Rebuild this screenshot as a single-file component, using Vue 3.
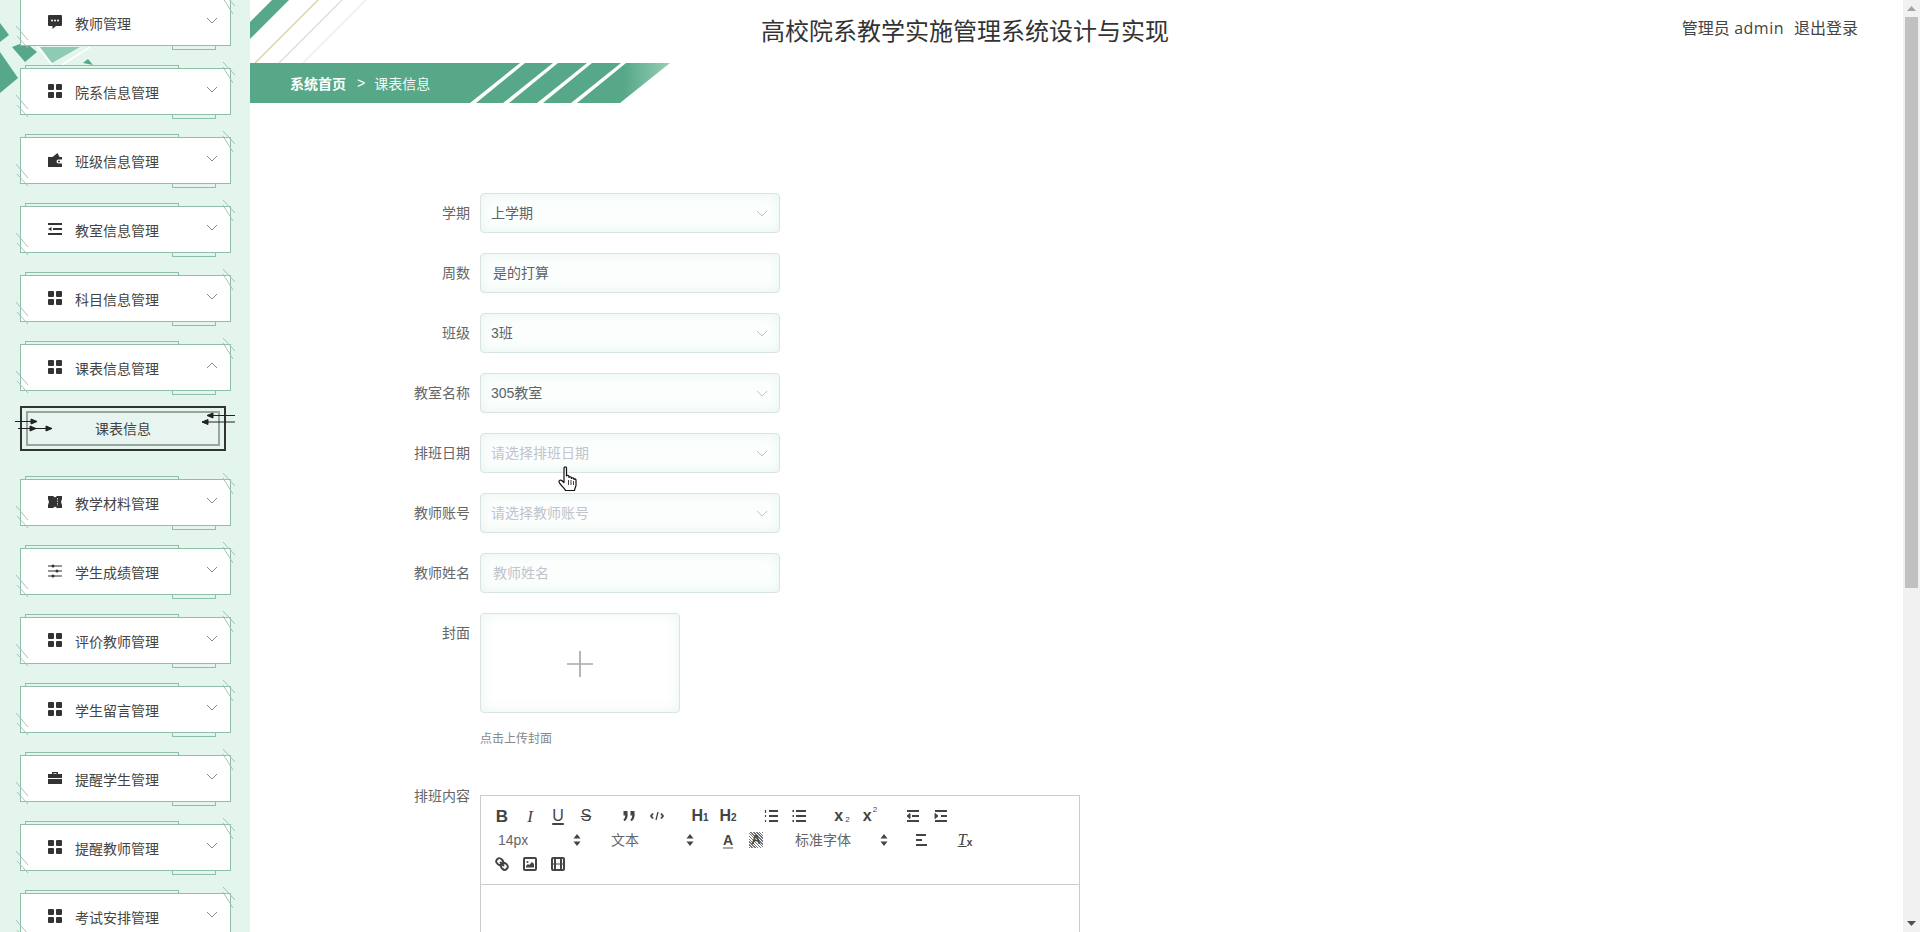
<script setup>
const menus = [
  { name: '教师管理', icon: 'chat' },
  { name: '院系信息管理', icon: 'grid' },
  { name: '班级信息管理', icon: 'wallet' },
  { name: '教室信息管理', icon: 'list' },
  { name: '科目信息管理', icon: 'grid' },
  { name: '课表信息管理', icon: 'grid', open: true, sub: '课表信息' },
  { name: '教学材料管理', icon: 'ticket' },
  { name: '学生成绩管理', icon: 'sliders' },
  { name: '评价教师管理', icon: 'grid' },
  { name: '学生留言管理', icon: 'grid' },
  { name: '提醒学生管理', icon: 'case' },
  { name: '提醒教师管理', icon: 'grid' },
  { name: '考试安排管理', icon: 'grid' }
]
const fields = [
  { label: '学期', value: '上学期', select: true },
  { label: '周数', value: '是的打算' },
  { label: '班级', value: '3班', select: true },
  { label: '教室名称', value: '305教室', select: true },
  { label: '排班日期', placeholder: '请选择排班日期', select: true },
  { label: '教师账号', placeholder: '请选择教师账号', select: true },
  { label: '教师姓名', placeholder: '教师姓名' }
]
const stripes = [270, 303, 337, 371]
</script>

<template>
  <div class="page">
    <aside class="side">
      <svg class="side-art" width="250" height="110" viewBox="0 0 250 110">
        <polygon points="0,23 9,35 0,42" fill="#57a888" />
        <polygon points="12,47 25,42 37,52 25,62" fill="#57a888" />
        <polygon points="0,52 18,78 0,93" fill="#57a888" />
        <polygon points="40,47 80,47 52,63" fill="#8fcbb3" />
        <path d="M37 46 52 65M62 65 90 47" stroke="#fff" stroke-width="1.5" fill="none" />
        <polygon points="83,63 88,59 93,65" fill="#57a888" />
      </svg>
      <nav class="menu">
        <template v-for="m in menus" :key="m.name">
          <div class="card">
            <span class="strip-top"></span>
            <span class="strip-bottom"></span>
            <svg class="hatch" width="211" height="47" viewBox="0 0 211 47">
              <path d="M203 -6 215 7M203 -1 213 15M-4 27 8 41M-3 37 8 49" stroke="#a3c5b8" stroke-width="1" fill="none" />
            </svg>
            <svg class="mi" width="14" height="14" viewBox="0 0 14 14" fill="#333">
              <template v-if="m.icon === 'grid'">
                <rect x="0" y="0" width="6" height="6" rx="1" />
                <rect x="8" y="0" width="6" height="6" rx="1" />
                <rect x="0" y="8" width="6" height="6" rx="1" />
                <rect x="8" y="8" width="6" height="6" rx="1" />
              </template>
              <template v-else-if="m.icon === 'chat'">
                <path d="M1 0H13A1 1 0 0 1 14 1V10A1 1 0 0 1 13 11H8L4.500 14V11H1A1 1 0 0 1 0 10V1A1 1 0 0 1 1 0Z" />
                <circle cx="4" cy="5.500" r="1" fill="#fff" />
                <circle cx="7" cy="5.500" r="1" fill="#fff" />
                <circle cx="10" cy="5.500" r="1" fill="#fff" />
              </template>
              <template v-else-if="m.icon === 'wallet'">
                <path d="M0 4H4.500L9.500 0 11.500 4H14V6.500H10.500A2 2 0 0 0 10.500 10.500H14V14H0Z" />
                <circle cx="11" cy="8.500" r="1" />
              </template>
              <template v-else-if="m.icon === 'list'">
                <rect x="0" y="1" width="14" height="2" />
                <rect x="5" y="6" width="9" height="2" />
                <rect x="0" y="11" width="14" height="2" />
                <path d="M3.500 5 0 7 3.500 9Z" />
              </template>
              <template v-else-if="m.icon === 'ticket'">
                <path d="M0 1H5L7 2.500 9 1H14V4L13 7 14 10V13H9L7 11.500 5 13H0V10L1 7 0 4Z" />
                <path d="M9.500 3V11" stroke="#fff" stroke-width=".7" stroke-dasharray="1.500 1" />
              </template>
              <template v-else-if="m.icon === 'sliders'">
                <path d="M0 2H14M0 7H14M0 12H14" stroke="#333" stroke-width="1.200" fill="none" />
                <circle cx="5" cy="2" r="1.500" />
                <circle cx="9" cy="7" r="1.500" />
                <circle cx="5" cy="12" r="1.500" />
              </template>
              <template v-else>
                <path d="M4 3V1H10V3H14V7H0V3ZM5.500 3H8.500V2.200H5.500ZM0 8H14V13H0Z" />
              </template>
            </svg>
            <span class="mt">{{ m.name }}</span>
            <svg class="chev" :class="{ up: m.open }" width="12" height="7" viewBox="0 0 12 7">
              <path d="M1 1 6 6 11 1" stroke="#888" stroke-width="1" fill="none" />
            </svg>
          </div>
          <div v-if="m.sub" class="sub">
            <div class="sub-inner">{{ m.sub }}</div>
            <svg class="arrows" width="230" height="45" viewBox="0 0 230 45">
              <g stroke="#222" stroke-width="1" fill="#222">
                <path d="M-5 15.500H17" />
                <path d="M11 13 17 15.500 11 18Z" />
                <path d="M-2 22.500H32" />
                <path d="M10 20 16 22.500 10 25Z" />
                <path d="M26 20 32 22.500 26 25Z" />
                <path d="M215 9.500H187" />
                <path d="M193 7 187 9.500 193 12Z" />
                <path d="M215 16H182" />
                <path d="M188 13.500 182 16 188 18.500Z" />
              </g>
            </svg>
          </div>
        </template>
      </nav>
    </aside>

    <main class="main">
      <svg class="corner" width="130" height="63" viewBox="0 0 130 63">
        <polygon points="0,22 22,0 39,0 0,39" fill="#57a888" />
        <path d="M5 63 68 0" stroke="#d6cf98" stroke-width="1.300" />
        <path d="M29 63 92 0" stroke="#dcdcdc" stroke-width="1.300" />
        <path d="M53 63 116 0" stroke="#ebebeb" stroke-width="1.300" />
      </svg>
      <header class="head">
        <h1 class="title">高校院系教学实施管理系统设计与实现</h1>
        <div class="user">
          <span>管理员 <span class="adm">admin</span></span>
          <span>退出登录</span>
        </div>
      </header>

      <div class="crumb">
        <svg class="crumb-bg" width="420" height="40" viewBox="0 0 420 40">
          <defs>
            <linearGradient id="cg" x1="0" x2="1" y1="0" y2="0">
              <stop offset="0.89" stop-color="#56a888" />
              <stop offset="1" stop-color="#97cfb6" />
            </linearGradient>
          </defs>
          <polygon points="0,0 420,0 370,40 0,40" fill="url(#cg)" />
          <polygon v-for="s in stripes" :key="s" :points="`${s},0 ${s + 5},0 ${s - 44},40 ${s - 50},40`" fill="#fff" />
        </svg>
        <b class="c1">系统首页</b>
        <span class="c2">&gt;</span>
        <span class="c3">课表信息</span>
      </div>

      <form class="form">
        <div v-for="f in fields" :key="f.label" class="row">
          <label class="lab">{{ f.label }}</label>
          <div class="field" :class="{ sel: f.select }">
            <span v-if="f.value" class="val">{{ f.value }}</span>
            <span v-else class="ph">{{ f.placeholder }}</span>
            <svg v-if="f.select" class="fchev" width="12" height="7" viewBox="0 0 12 7">
              <path d="M1 1 6 6 11 1" stroke="#c0c4cc" stroke-width="1" fill="none" />
            </svg>
          </div>
        </div>

        <div class="row upload-row">
          <label class="lab">封面</label>
          <div>
            <div class="upload">
              <svg class="plus" width="28" height="28" viewBox="0 0 28 28">
                <path d="M1 14H27M14 1V27" stroke="#a8a8a8" stroke-width="1.700" />
              </svg>
            </div>
            <div class="hint">点击上传封面</div>
          </div>
        </div>

        <div class="editor-row">
          <label class="lab lab-top">排班内容</label>
          <div class="editor">
            <div class="tb">
              <div class="tb-row">
                <div class="grp">
                  <span class="btn t-b">B</span>
                  <span class="btn t-i">I</span>
                  <span class="btn t-u">U</span>
                  <span class="btn t-s">S</span>
                </div>
                <div class="grp">
                  <span class="btn"><svg width="18" height="18" viewBox="0 0 18 18"><rect x="3.500" y="4" width="4" height="4.500" fill="#444" /><rect x="10.500" y="4" width="4" height="4.500" fill="#444" /><path d="M6.500 7.500C6.500 11.500 4 13.500 4 13.500M13.500 7.500C13.500 11.500 11 13.500 11 13.500" fill="none" stroke="#444" stroke-width="2.200" /></svg></span>
                  <span class="btn"><svg width="18" height="18" viewBox="0 0 18 18" fill="none" stroke="#444" stroke-width="1.800"><path d="M5 6.500 3 9 5 11.500M13 6.500 15 9 13 11.500" /><path d="M10 5 8 13" stroke-width="1.300" /></svg></span>
                </div>
                <div class="grp">
                  <span class="btn t-h">H<small>1</small></span>
                  <span class="btn t-h">H<small>2</small></span>
                </div>
                <div class="grp">
                  <span class="btn"><svg width="18" height="18" viewBox="0 0 18 18" fill="none" stroke="#444" stroke-width="2"><path d="M7 4H16M7 9H16M7 14H16" /><path d="M3.500 3V6M3.500 8V10M3.500 13V15" stroke-width="1.200" /></svg></span>
                  <span class="btn"><svg width="18" height="18" viewBox="0 0 18 18" fill="none" stroke="#444" stroke-width="2"><path d="M6 4H16M6 9H16M6 14H16" /><path d="M2.500 4H4M2.500 9H4M2.500 14H4" /></svg></span>
                </div>
                <div class="grp">
                  <span class="btn t-x">x<sub>2</sub></span>
                  <span class="btn t-x">x<sup>2</sup></span>
                </div>
                <div class="grp">
                  <span class="btn"><svg width="18" height="18" viewBox="0 0 18 18" fill="none" stroke="#444" stroke-width="2"><path d="M3 4H15M8 9H15M3 14H15" /><path d="M6 6.500 3 9 6 11.500Z" fill="#444" stroke-width="1" /></svg></span>
                  <span class="btn"><svg width="18" height="18" viewBox="0 0 18 18" fill="none" stroke="#444" stroke-width="2"><path d="M3 4H15M9 9H15M3 14H15" /><path d="M3 6.500 6 9 3 11.500Z" fill="#444" stroke-width="1" /></svg></span>
                </div>
              </div>
              <div class="tb-row">
                <div class="grp">
                  <div class="pick w98">14px<svg class="updn" width="8" height="12" viewBox="0 0 8 12"><path d="M4 0 7.500 4.500H.5ZM4 12 .5 7.500H7.500Z" fill="#444" /></svg></div>
                </div>
                <div class="grp">
                  <div class="pick w98">文本<svg class="updn" width="8" height="12" viewBox="0 0 8 12"><path d="M4 0 7.500 4.500H.5ZM4 12 .5 7.500H7.500Z" fill="#444" /></svg></div>
                </div>
                <div class="grp">
                  <span class="btn t-a">A</span>
                  <span class="btn"><span class="t-ab">A</span></span>
                </div>
                <div class="grp">
                  <div class="pick w108">标准字体<svg class="updn" width="8" height="12" viewBox="0 0 8 12"><path d="M4 0 7.500 4.500H.5ZM4 12 .5 7.500H7.500Z" fill="#444" /></svg></div>
                </div>
                <div class="grp">
                  <span class="btn"><svg width="18" height="18" viewBox="0 0 18 18" fill="none" stroke="#444" stroke-width="2"><path d="M3 4H13M3 9H9M3 14H14" /></svg></span>
                </div>
                <div class="grp">
                  <span class="btn t-c"><i>T</i><b>x</b></span>
                </div>
              </div>
              <div class="tb-row">
                <div class="grp">
                  <span class="btn"><svg width="18" height="18" viewBox="0 0 18 18" fill="none" stroke="#444" stroke-width="2"><path d="M7 7 11 11" /><path d="M8.900 4.577a3.476 3.476 0 0 1 .36 4.679A3.476 3.476 0 0 1 4.577 8.900C3.185 7.500 2.035 6.400 4.217 4.217S7.500 3.185 8.900 4.577Z" /><path d="M13.423 9.100a3.476 3.476 0 0 0-4.679-.36 3.476 3.476 0 0 0 .36 4.679c1.392 1.392 2.500 2.542 4.679.36S14.815 10.500 13.423 9.100Z" /></svg></span>
                  <span class="btn"><svg width="18" height="18" viewBox="0 0 18 18"><rect x="3" y="3" width="12" height="12" rx="1" fill="none" stroke="#444" stroke-width="2" /><circle cx="6.500" cy="7" r="1" fill="#444" /><path d="M5 12.500V11L7 9 8 10 11 7 13 9V12.500Z" fill="#444" /></svg></span>
                  <span class="btn"><svg width="18" height="18" viewBox="0 0 18 18"><rect x="3" y="3" width="12" height="12" rx="1" fill="none" stroke="#444" stroke-width="2" /><path d="M5 3H7V15H5ZM11 3H13V15H11ZM3 8.500H15V9.500H3Z" fill="#444" /></svg></span>
                </div>
              </div>
            </div>
            <div class="ed-body"></div>
          </div>
        </div>
      </form>
    </main>

    <div class="scroll">
      <span class="sb-btn"><svg width="9" height="5" viewBox="0 0 9 5"><path d="M4.500 0 9 5H0Z" fill="#a3a3a3" /></svg></span>
      <span class="sb-thumb"></span>
      <span class="sb-rest"></span>
      <span class="sb-btn"><svg width="9" height="5" viewBox="0 0 9 5"><path d="M4.500 5 9 0H0Z" fill="#505050" /></svg></span>
    </div>

    <svg class="hand" width="20" height="26" viewBox="0 0 20 26">
      <path d="M6 2C6 .6 8.500 .6 8.500 2V10C8.500 9 11 9 11 10.500V11.500C11 10.500 13.500 10.500 13.500 12V12.500C13.500 11.500 16 11.500 16 13V13.500C16 12.700 18 12.700 18 14V19C18 21 16.500 22.500 16.500 24.500H7.500C6.500 22 1 18 1 15.500 1 13.500 3.500 13.500 6 16.500Z" fill="#fff" stroke="#111" stroke-width="1.200" stroke-linejoin="round" />
      <path d="M10.500 14V19M13 14V19M15.500 15V19" stroke="#111" stroke-width=".8" />
    </svg>
  </div>
</template>

<style>
html, body { margin: 0; height: 932px; overflow: hidden; background: #fff; }
</style>

<style scoped>
.page {
  position: relative;
  display: flex;
  height: 932px;
  overflow: hidden;
  font-family: "Liberation Sans", "Noto Sans CJK SC", sans-serif;
  font-size: 14px;
  color: #333;
  background: #fff;
}
.side {
  position: relative;
  flex: 0 0 250px;
  height: 932px;
  overflow: hidden;
  background: #e3f5ed;
}
.side-art { position: absolute; left: 0; top: 0; }
.menu { position: relative; margin-top: -1px; padding-left: 20px; }
.card {
  position: relative;
  display: flex;
  align-items: center;
  box-sizing: border-box;
  width: 211px;
  height: 47px;
  margin-bottom: 22px;
  padding-left: 27px;
  background: #fff;
  border: 1px solid #8fbfa9;
}
.strip-top {
  position: absolute;
  left: 4px;
  top: -4px;
  width: 152px;
  height: 3px;
  border: 1px solid #8fbfa9;
  border-bottom: 0;
}
.strip-bottom {
  position: absolute;
  left: 151px;
  bottom: -5px;
  width: 42px;
  height: 3px;
  border: 1px solid #8fbfa9;
  border-top: 0;
}
.hatch { position: absolute; left: -1px; top: -1px; overflow: visible; }
.mi { flex: none; margin-top: -1px; }
.mt { margin-left: 13px; line-height: 20px; margin-top: 2px; color: #444; white-space: nowrap; }
.chev { position: absolute; right: 12px; top: 17px; }
.chev.up { transform: rotate(180deg); }
.sub {
  position: relative;
  box-sizing: border-box;
  width: 206px;
  height: 45px;
  margin: -7px 0 28px;
  padding: 3px 4px;
  border: 2px solid #333;
}
.sub-inner {
  box-sizing: border-box;
  height: 35px;
  line-height: 33px;
  text-align: center;
  background: #e8f4ef;
  border: 2px solid #9aa5a0;
  color: #444;
}
.arrows { position: absolute; left: -2px; top: -2px; overflow: visible; }

.main { position: relative; flex: 1; min-width: 0; overflow: hidden; background: #fff; }
.corner { position: absolute; left: 0; top: 0; }
.head { position: relative; display: flex; height: 63px; }
.title {
  margin: 0 0 0 511px;
  font-size: 24px;
  font-weight: 400;
  line-height: 64px;
  color: #333;
  white-space: nowrap;
}
.user {
  display: flex;
  gap: 10px;
  margin-left: auto;
  padding-right: 45px;
  font-size: 16px;
  line-height: 57px;
  color: #444;
  white-space: nowrap;
}
.adm { font-family: "Open Sans", sans-serif; letter-spacing: .5px; }
.crumb {
  position: relative;
  display: flex;
  align-items: center;
  width: 420px;
  height: 40px;
  color: #fff;
}
.crumb-bg { position: absolute; left: 0; top: 0; }
.crumb b, .crumb span { position: relative; }
.c1 { margin-left: 40px; }
.c2 { margin-left: 11px; }
.c3 { margin-left: 9px; opacity: .92; }

.form { padding: 90px 0 0 0; }
.row { display: flex; margin-bottom: 20px; }
.lab {
  flex: 0 0 230px;
  box-sizing: border-box;
  padding-right: 10px;
  line-height: 40px;
  text-align: right;
  color: #666;
  white-space: nowrap;
}
.field {
  position: relative;
  box-sizing: border-box;
  width: 300px;
  height: 40px;
  padding-left: 12px;
  line-height: 38px;
  background: #fbfefd;
  border: 1px solid #d9e3e0;
  border-radius: 4px;
  box-shadow: inset 0 0 12px rgba(185, 225, 212, .3);
  color: #606266;
}
.field.sel { padding-left: 10px; }
.ph { color: #c0c4cc; }
.fchev { position: absolute; right: 11px; top: 16px; }
.upload-row { margin-bottom: 27px; }
.upload {
  display: flex;
  align-items: center;
  justify-content: center;
  box-sizing: border-box;
  width: 200px;
  height: 100px;
  padding-top: 1px;
  background: #fff;
  border: 1px solid #d9e3e0;
  border-radius: 4px;
  box-shadow: inset 0 0 14px rgba(185, 225, 212, .3);
}
.hint { margin-top: 6px; font-size: 12px; line-height: 40px; color: #888; }
.editor-row { display: flex; }
.lab-top { line-height: 20px; }
.editor { width: 600px; padding-top: 9px; }
.tb {
  box-sizing: border-box;
  height: 90px;
  padding: 8px 7px;
  border: 1px solid #ccc;
}
.tb-row { display: flex; height: 24px; align-items: center; }
.grp { display: flex; align-items: center; margin-right: 15px; }
.btn {
  display: flex;
  align-items: center;
  justify-content: center;
  width: 28px;
  height: 24px;
  color: #444;
  font-family: "Liberation Sans", sans-serif;
  line-height: 1;
}
.t-b { font-size: 17px; font-weight: 700; }
.t-i { font-family: "Liberation Serif", serif; font-size: 17px; font-style: italic; }
.t-u { font-size: 16px; text-decoration: underline; text-underline-offset: 2px; text-decoration-thickness: 1.500px; }
.t-s { font-size: 16px; text-decoration: line-through; }
.t-h { font-size: 16px; font-weight: 700; }
.t-h small { margin-top: 4px; font-size: 10px; }
.t-x { font-size: 16px; font-weight: 700; }
.t-x sub, .t-x sup { position: relative; font-size: 8px; font-weight: 400; line-height: 0; vertical-align: baseline; }
.t-x sub { top: 4px; margin-left: 2px; }
.t-x sup { top: -6px; margin-left: 1px; }
.t-a { font-size: 14px; font-weight: 700; text-decoration: underline; text-decoration-color: #aaa; text-decoration-thickness: 2px; text-underline-offset: 2px; }
.t-ab {
  padding: 1px 2px;
  font-size: 13px;
  font-weight: 700;
  line-height: 14px;
  background: repeating-linear-gradient(45deg, #777 0 1px, #fff 1px 2px);
}
.t-c { font-size: 16px; }
.t-c i { font-family: "Liberation Serif", serif; text-decoration: underline; }
.t-c b { margin-top: 6px; font-size: 10px; }
.pick {
  position: relative;
  box-sizing: border-box;
  height: 24px;
  padding-left: 10px;
  font-size: 14px;
  line-height: 24px;
  color: #666;
}
.w98 { width: 98px; }
.w108 { width: 108px; }
.updn { position: absolute; right: 5px; top: 6px; }
.ed-body { height: 200px; border: 1px solid #ccc; border-top: 0; }

.scroll {
  display: flex;
  flex-direction: column;
  flex: 0 0 17px;
  height: 932px;
  background: #f1f1f1;
}
.sb-btn { display: flex; align-items: center; justify-content: center; height: 17px; }
.sb-thumb { height: 571px; margin: 0 2px; background: #c1c1c1; }
.sb-rest { flex: 1; }
.hand { position: absolute; left: 558px; top: 466px; }
</style>
